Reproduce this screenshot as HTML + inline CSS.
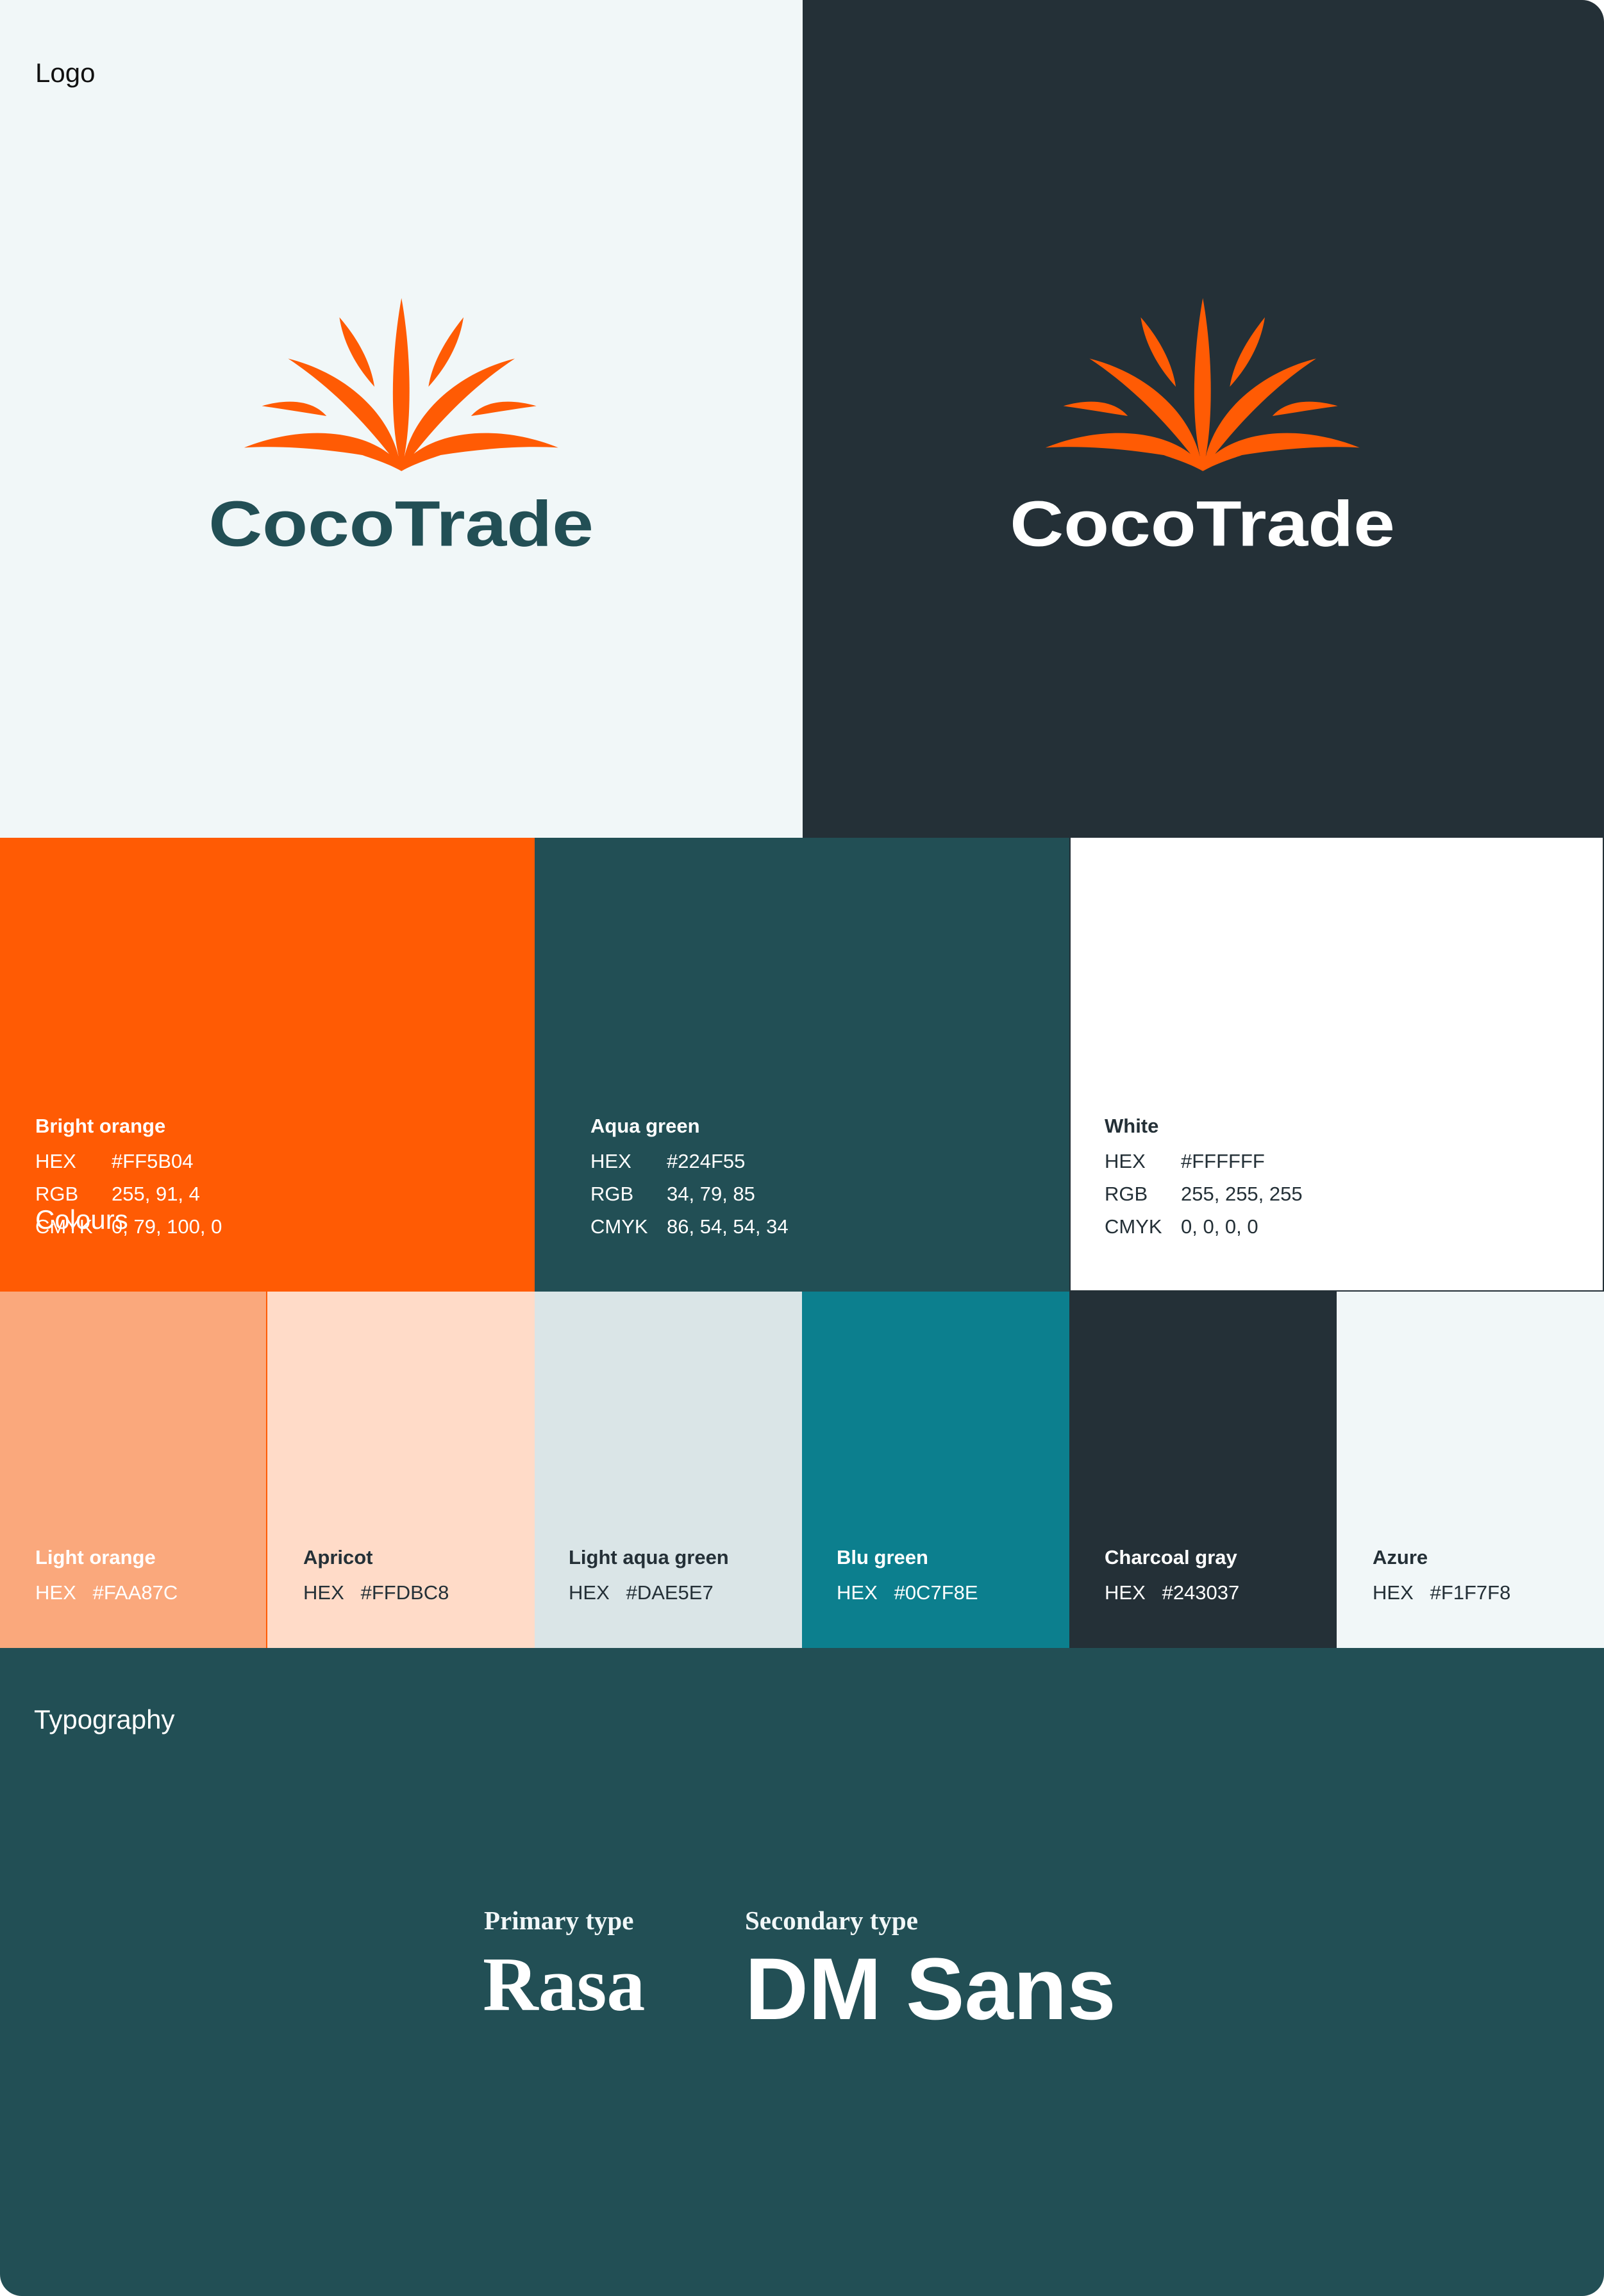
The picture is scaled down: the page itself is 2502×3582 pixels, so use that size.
<!DOCTYPE html>
<html><head><meta charset="utf-8"><style>
*{margin:0;padding:0;box-sizing:border-box}
html,body{width:2502px;height:3582px;background:#fff;overflow:hidden}
body{position:relative;font-family:"Liberation Sans",sans-serif}
.a{position:absolute;line-height:1;white-space:nowrap}
.b{position:absolute}
.s{font-family:"Liberation Serif",serif;font-weight:bold}
</style></head><body>
<div class="b" style="left:0;top:0;width:1252px;height:1307px;background:#F1F7F8"></div>
<div class="b" style="left:1252px;top:0;width:1250px;height:1307px;background:#243037;border-top-right-radius:34px"></div>
<div class="a" style="left:55px;top:93px;font-size:42px;color:#111">Logo</div>

<svg class="b" style="left:300px;top:430px" width="660" height="450" viewBox="0 0 1568 1350" preserveAspectRatio="none">
<g fill="#FF5B04">
<path d="M775,105 C740,350 730,650 765,850 L785,850 C815,650 810,350 775,105 Z"/>
<path d="M545,195 C560,320 610,430 675,520 C660,400 610,290 545,195 Z"/>
<path d="M1005,195 C945,290 890,400 875,520 C940,430 990,320 1005,195 Z"/>
<path d="M355,388 C550,450 720,620 765,850 L730,835 C620,660 500,510 355,388 Z"/>
<path d="M1195,388 C1000,450 830,620 785,850 L820,835 C930,660 1050,510 1195,388 Z"/>
<path d="M258,610 C340,580 440,575 497,657 C420,642 340,625 258,610 Z"/>
<path d="M1275,610 C1190,580 1090,575 1033,657 C1110,642 1190,625 1275,610 Z"/>
<path d="M192,805 C400,700 620,720 735,840 L775,915 C720,875 650,850 630,840 C480,810 330,795 192,805 Z"/>
<path d="M1356,805 C1150,700 930,720 815,840 L775,915 C830,875 900,850 920,840 C1070,810 1220,795 1356,805 Z"/>
<path d="M728,832 L765,845 L785,845 L822,832 L775,915 Z"/>
</g>
<text x="60" y="1265" font-family="Liberation Sans" font-weight="bold" font-size="300" fill="#224F55" textLength="1427" lengthAdjust="spacingAndGlyphs">CocoTrade</text>
</svg>
<svg class="b" style="left:1550px;top:430px" width="660" height="450" viewBox="0 0 1568 1350" preserveAspectRatio="none">
<g fill="#FF5B04">
<path d="M775,105 C740,350 730,650 765,850 L785,850 C815,650 810,350 775,105 Z"/>
<path d="M545,195 C560,320 610,430 675,520 C660,400 610,290 545,195 Z"/>
<path d="M1005,195 C945,290 890,400 875,520 C940,430 990,320 1005,195 Z"/>
<path d="M355,388 C550,450 720,620 765,850 L730,835 C620,660 500,510 355,388 Z"/>
<path d="M1195,388 C1000,450 830,620 785,850 L820,835 C930,660 1050,510 1195,388 Z"/>
<path d="M258,610 C340,580 440,575 497,657 C420,642 340,625 258,610 Z"/>
<path d="M1275,610 C1190,580 1090,575 1033,657 C1110,642 1190,625 1275,610 Z"/>
<path d="M192,805 C400,700 620,720 735,840 L775,915 C720,875 650,850 630,840 C480,810 330,795 192,805 Z"/>
<path d="M1356,805 C1150,700 930,720 815,840 L775,915 C830,875 900,850 920,840 C1070,810 1220,795 1356,805 Z"/>
<path d="M728,832 L765,845 L785,845 L822,832 L775,915 Z"/>
</g>
<text x="60" y="1265" font-family="Liberation Sans" font-weight="bold" font-size="300" fill="#fff" textLength="1427" lengthAdjust="spacingAndGlyphs">CocoTrade</text>
</svg>

<!-- row 1 -->
<div class="b" style="left:0;top:1307px;width:834px;height:708px;background:#FF5B04"></div>
<div class="b" style="left:834px;top:1307px;width:834px;height:708px;background:#224F55"></div>
<div class="b" style="left:1668px;top:1307px;width:834px;height:708px;background:#fff;border:2px solid #243037;border-top:none"></div>

<div class="a" style="left:55px;top:1741px;font-size:31px;font-weight:bold;color:#fff">Bright orange</div>
<div class="a" style="left:55px;top:1796px;font-size:31px;color:#fff">HEX</div><div class="a" style="left:174px;top:1796px;font-size:31px;color:#fff">#FF5B04</div>
<div class="a" style="left:55px;top:1847px;font-size:31px;color:#fff">RGB</div><div class="a" style="left:174px;top:1847px;font-size:31px;color:#fff">255, 91, 4</div>
<div class="a" style="left:55px;top:1898px;font-size:31px;color:#fff">CMYK</div><div class="a" style="left:174px;top:1898px;font-size:31px;color:#fff">0, 79, 100, 0</div>
<div class="a" style="left:55px;top:1882px;font-size:42px;color:#fff">Colours</div>

<div class="a" style="left:921px;top:1741px;font-size:31px;font-weight:bold;color:#fff">Aqua green</div>
<div class="a" style="left:921px;top:1796px;font-size:31px;color:#fff">HEX</div><div class="a" style="left:1040px;top:1796px;font-size:31px;color:#fff">#224F55</div>
<div class="a" style="left:921px;top:1847px;font-size:31px;color:#fff">RGB</div><div class="a" style="left:1040px;top:1847px;font-size:31px;color:#fff">34, 79, 85</div>
<div class="a" style="left:921px;top:1898px;font-size:31px;color:#fff">CMYK</div><div class="a" style="left:1040px;top:1898px;font-size:31px;color:#fff">86, 54, 54, 34</div>

<div class="a" style="left:1723px;top:1741px;font-size:31px;font-weight:bold;color:#243037">White</div>
<div class="a" style="left:1723px;top:1796px;font-size:31px;color:#243037">HEX</div><div class="a" style="left:1842px;top:1796px;font-size:31px;color:#243037">#FFFFFF</div>
<div class="a" style="left:1723px;top:1847px;font-size:31px;color:#243037">RGB</div><div class="a" style="left:1842px;top:1847px;font-size:31px;color:#243037">255, 255, 255</div>
<div class="a" style="left:1723px;top:1898px;font-size:31px;color:#243037">CMYK</div><div class="a" style="left:1842px;top:1898px;font-size:31px;color:#243037">0, 0, 0, 0</div>

<!-- row 2 -->
<div class="b" style="left:0;top:2015px;width:417px;height:556px;background:#FAA87C;border-right:2px solid #FF5B04"></div>
<div class="b" style="left:417px;top:2015px;width:417px;height:556px;background:#FFDBC8"></div>
<div class="b" style="left:834px;top:2015px;width:417px;height:556px;background:#DAE5E7"></div>
<div class="b" style="left:1251px;top:2015px;width:417px;height:556px;background:#0C7F8E"></div>
<div class="b" style="left:1668px;top:2015px;width:417px;height:556px;background:#243037"></div>
<div class="b" style="left:2085px;top:2015px;width:417px;height:556px;background:#F1F7F8"></div>

<div class="a" style="left:55px;top:2414px;font-size:31px;font-weight:bold;color:#fff">Light orange</div>
<div class="a" style="left:55px;top:2469px;font-size:31px;color:#fff">HEX&nbsp;&nbsp;&nbsp;#FAA87C</div>
<div class="a" style="left:473px;top:2414px;font-size:31px;font-weight:bold;color:#243037">Apricot</div>
<div class="a" style="left:473px;top:2469px;font-size:31px;color:#243037">HEX&nbsp;&nbsp;&nbsp;#FFDBC8</div>
<div class="a" style="left:887px;top:2414px;font-size:31px;font-weight:bold;color:#243037">Light aqua green</div>
<div class="a" style="left:887px;top:2469px;font-size:31px;color:#243037">HEX&nbsp;&nbsp;&nbsp;#DAE5E7</div>
<div class="a" style="left:1305px;top:2414px;font-size:31px;font-weight:bold;color:#fff">Blu green</div>
<div class="a" style="left:1305px;top:2469px;font-size:31px;color:#fff">HEX&nbsp;&nbsp;&nbsp;#0C7F8E</div>
<div class="a" style="left:1723px;top:2414px;font-size:31px;font-weight:bold;color:#fff">Charcoal gray</div>
<div class="a" style="left:1723px;top:2469px;font-size:31px;color:#fff">HEX&nbsp;&nbsp;&nbsp;#243037</div>
<div class="a" style="left:2141px;top:2414px;font-size:31px;font-weight:bold;color:#243037">Azure</div>
<div class="a" style="left:2141px;top:2469px;font-size:31px;color:#243037">HEX&nbsp;&nbsp;&nbsp;#F1F7F8</div>

<!-- typography -->
<div class="b" style="left:0;top:2571px;width:2502px;height:1011px;background:#224F55;border-radius:0 0 34px 34px"></div>
<div class="a" style="left:53px;top:2662px;font-size:42px;color:#fff">Typography</div>
<div class="a s" style="left:755px;top:2976px;font-size:41px;color:#F1F7F8">Primary type</div>
<div class="a s" style="left:1162px;top:2976px;font-size:41px;color:#F1F7F8">Secondary type</div>
<div class="a s" style="left:753px;top:3036px;font-size:120px;color:#fff">Rasa</div>
<div class="a" style="left:1162px;top:3035px;font-size:137px;font-weight:bold;color:#fff">DM Sans</div>
</body></html>
